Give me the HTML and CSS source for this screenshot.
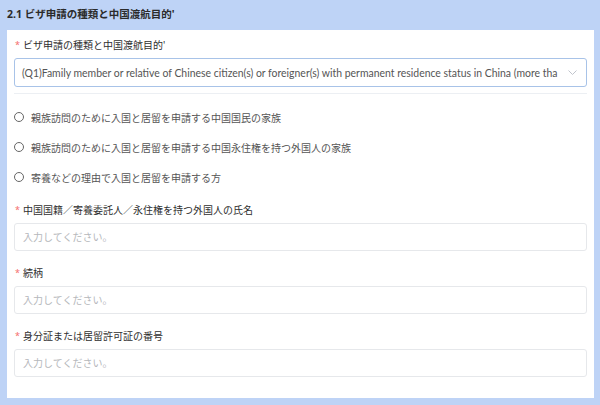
FILE: index.html
```html
<!DOCTYPE html>
<html lang="ja">
<head>
<meta charset="utf-8">
<link rel="stylesheet" href="styles.css">
</head>
<body>
<div class="page">
  <div class="section-title">2.1 ビザ申請の種類と中国渡航目的'</div>
  <div class="panel">
    <div class="field">
      <div class="label"><span class="req">*</span>ビザ申請の種類と中国渡航目的'</div>
      <div class="select">
        <span class="select-text">(Q1)Family member or relative of Chinese citizen(s) or foreigner(s) with permanent residence status in China (more tha</span>
        <svg class="chev" width="9" height="5" viewBox="0 0 9 5"><path d="M0.5 0.5l4 4 4-4" fill="none" stroke="#c0c4cc" stroke-width="1"/></svg>
      </div>
    </div>
    <div class="divider"></div>
    <div class="radios">
      <label class="radio"><span class="circle"></span>親族訪問のために入国と居留を申請する中国国民の家族</label>
      <label class="radio"><span class="circle"></span>親族訪問のために入国と居留を申請する中国永住権を持つ外国人の家族</label>
      <label class="radio"><span class="circle"></span>寄養などの理由で入国と居留を申請する方</label>
    </div>
    <div class="field">
      <div class="label"><span class="req">*</span>中国国籍／寄養委託人／永住権を持つ外国人の氏名</div>
      <div class="input">入力してください。</div>
    </div>
    <div class="field">
      <div class="label"><span class="req">*</span>続柄</div>
      <div class="input">入力してください。</div>
    </div>
    <div class="field">
      <div class="label"><span class="req">*</span>身分証または居留許可証の番号</div>
      <div class="input">入力してください。</div>
    </div>
  </div>
</div>
</body>
</html>
```

FILE: styles.css
```css
html, body {
  margin: 0;
  padding: 0;
}
body {
  width: 600px;
  height: 405px;
  overflow: hidden;
  background: #bed3f6;
  font-family: "Noto Sans", "Noto Sans CJK JP", sans-serif;
  color: #333;
}
.page {
  padding: 0 6px 0 7px;
}
.section-title {
  height: 30px;
  line-height: 29px;
  font-size: 10.5px;
  font-weight: 700;
  color: #2b2b2b;
}
.panel {
  background: #fff;
  height: 368px;
  padding: 2px 7px 0 7px;
  box-sizing: border-box;
}
.field {
  display: flex;
  flex-direction: column;
}
.label {
  height: 26px;
  line-height: 26px;
  font-size: 10px;
  color: #2f2f2f;
}
.req {
  color: #f56c6c;
  font-size: 9px;
  margin: 0 3px 0 1px;
  vertical-align: 1px;
}
.select {
  height: 29px;
  box-sizing: border-box;
  border: 1px solid #a8c3e8;
  border-radius: 3px;
  display: flex;
  align-items: center;
  padding: 0 9px 0 7px;
  gap: 8px;
}
.select-text {
  flex: 1;
  white-space: nowrap;
  font-family: "Lato", "Noto Sans", sans-serif;
  font-size: 10.45px;
  color: #555;
}
.chev {
  flex: none;
}
.divider {
  height: 1px;
  background: #eceff3;
  margin-top: 6px;
}
.radios {
  display: flex;
  flex-direction: column;
  padding: 8px 0 5px 0;
}
.radio {
  height: 30px;
  display: flex;
  align-items: center;
  font-size: 10px;
  color: #555;
}
.circle {
  width: 8px;
  height: 8px;
  border: 1px solid #666;
  border-radius: 50%;
  margin: 0 7px 0 0;
}
.input {
  height: 28px;
  box-sizing: border-box;
  border: 1px solid #e6e8eb;
  border-radius: 3px;
  line-height: 26px;
  padding-left: 8px;
  font-size: 10px;
  color: #b5b7bb;
  margin-bottom: 9px;
}
```
